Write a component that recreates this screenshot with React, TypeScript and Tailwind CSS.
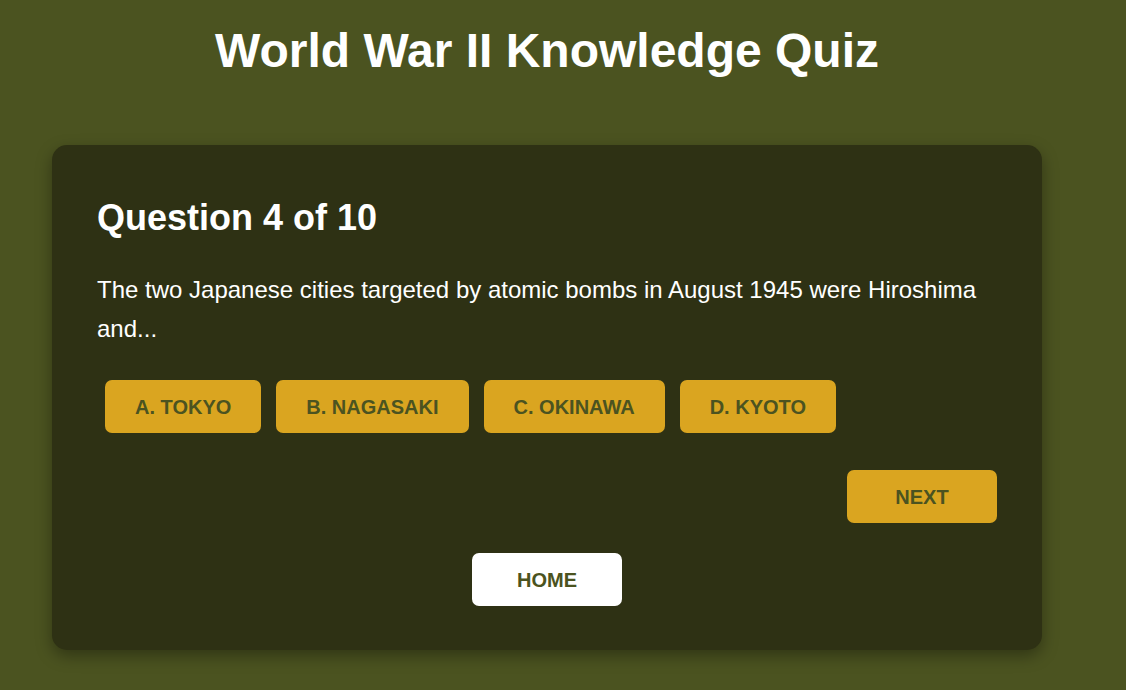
import React from "react";

export default function App() {
  const options = ["A. TOKYO", "B. NAGASAKI", "C. OKINAWA", "D. KYOTO"];
  return (
    <div
      className="min-h-[690px] w-full bg-[#4b5320] text-white"
      style={{ fontFamily: '"Liberation Sans", Arial, sans-serif' }}
    >
      <div className="pl-[52px] pt-[23px]">
        <div className="w-[990px]">
          <h1 className="text-center text-[48px] font-bold leading-[56px] text-white">
            World War II Knowledge Quiz
          </h1>
          <div className="mt-[66px] rounded-[15px] bg-[#2e3114] px-[45px] pb-[44px] pt-[52px] shadow-[0_6px_16px_rgba(0,0,0,0.35)]">
            <h2 className="text-[36px] font-bold leading-[41px] text-white">Question 4 of 10</h2>
            <p className="mt-[32px] text-[24px] leading-[39px] text-white">
              The two Japanese cities targeted by atomic bombs in August 1945 were Hiroshima and...
            </p>
            <div className="ml-[8px] mt-[32px] flex flex-wrap gap-[15px]">
              {options.map((o) => (
                <button
                  key={o}
                  className="flex h-[53px] items-center justify-center rounded-[7px] bg-[#daa520] px-[30px] text-[20px] font-bold text-[#4b5320]"
                >
                  {o}
                </button>
              ))}
            </div>
            <div className="mt-[37px] flex justify-end">
              <button className="flex h-[53px] w-[150px] items-center justify-center rounded-[7px] bg-[#daa520] text-[20px] font-bold text-[#4b5320]">
                NEXT
              </button>
            </div>
            <div className="mt-[30px] flex justify-center">
              <button className="flex h-[53px] w-[150px] items-center justify-center rounded-[7px] bg-white text-[20px] font-bold text-[#4b5320]">
                HOME
              </button>
            </div>
          </div>
        </div>
      </div>
    </div>
  );
}
